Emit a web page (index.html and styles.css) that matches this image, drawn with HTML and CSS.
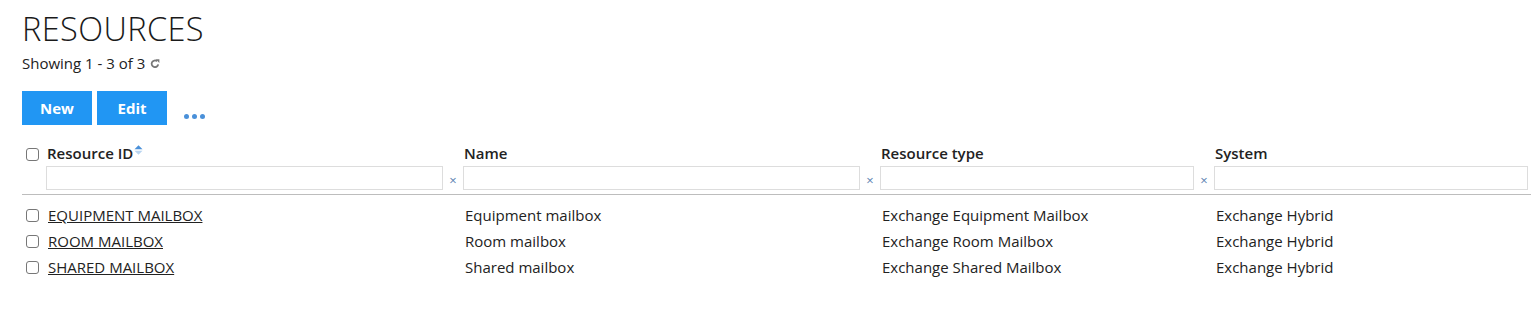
FILE: index.html
```html
<!DOCTYPE html>
<html>
<head>
<meta charset="utf-8">
<link rel="stylesheet" href="styles.css">
</head>
<body>
<div class="page">
  <h1 class="title">RESOURCES</h1>
  <div class="count">Showing 1 - 3 of 3 <svg class="refresh" width="10" height="11" viewBox="0 0 10 11"><path d="M8.2 6.3A3.3 3.3 0 1 1 7 3.2" fill="none" stroke="#777" stroke-width="1.8"/><path d="M5.6 1.2L9.4 1.2L9.4 5z" fill="#777"/></svg></div>
  <div class="toolbar">
    <button class="btn">New</button>
    <button class="btn">Edit</button>
    <span class="more"><i></i><i></i><i></i></span>
  </div>
  <div class="table">
    <div class="head">
      <div class="cell chk"><span class="box"></span></div>
      <div class="cell hcol">
        <div class="hlabel">Resource ID<svg class="sort" width="9" height="10" viewBox="0 0 9 10"><path d="M0.5 4.2L4.5 0.3L8.5 4.2z" fill="#4a90d9"/><path d="M0.5 5.8L4.5 9.7L8.5 5.8z" fill="#b8d4f0"/></svg></div>
        <div class="filter"><span class="input"></span><span class="clear">×</span></div>
      </div>
      <div class="cell hcol">
        <div class="hlabel">Name</div>
        <div class="filter"><span class="input"></span><span class="clear">×</span></div>
      </div>
      <div class="cell hcol">
        <div class="hlabel">Resource type</div>
        <div class="filter"><span class="input"></span><span class="clear">×</span></div>
      </div>
      <div class="cell hcol">
        <div class="hlabel">System</div>
        <div class="filter"><span class="input last"></span></div>
      </div>
    </div>
    <div class="rows">
      <div class="row">
        <div class="cell chk"><span class="box"></span></div>
        <div class="cell"><a href="#">EQUIPMENT MAILBOX</a></div>
        <div class="cell">Equipment mailbox</div>
        <div class="cell">Exchange Equipment Mailbox</div>
        <div class="cell">Exchange Hybrid</div>
      </div>
      <div class="row">
        <div class="cell chk"><span class="box"></span></div>
        <div class="cell"><a href="#">ROOM MAILBOX</a></div>
        <div class="cell">Room mailbox</div>
        <div class="cell">Exchange Room Mailbox</div>
        <div class="cell">Exchange Hybrid</div>
      </div>
      <div class="row">
        <div class="cell chk"><span class="box"></span></div>
        <div class="cell"><a href="#">SHARED MAILBOX</a></div>
        <div class="cell">Shared mailbox</div>
        <div class="cell">Exchange Shared Mailbox</div>
        <div class="cell">Exchange Hybrid</div>
      </div>
    </div>
  </div>
</div>
</body>
</html>
```
FILE: styles.css
```css
html, body {
  margin: 0;
  padding: 0;
  background: #fff;
}
body {
  font-family: "Open Sans", "Liberation Sans", sans-serif;
  font-size: 15px;
  color: #222;
  overflow: hidden;
}
.page {
  padding: 10px 0 0 22px;
}
.title {
  margin: 0;
  font-family: "Open Sans", sans-serif;
  font-weight: 300;
  font-size: 32.5px;
  line-height: 37px;
  letter-spacing: 0.4px;
  color: #1a1a1a;
}
.count {
  margin-top: 6px;
  line-height: 20px;
  display: flex;
  align-items: center;
  gap: 5px;
}
.refresh {
  margin-top: 1px;
}
.toolbar {
  margin-top: 18px;
  display: flex;
  align-items: center;
  gap: 5px;
}
.btn {
  width: 70px;
  height: 34px;
  border: 0;
  background: #2196f3;
  color: #fff;
  font-family: "Open Sans", sans-serif;
  font-weight: 700;
  font-size: 15px;
  padding: 0;
}
.more {
  display: flex;
  gap: 3px;
  margin-left: 12px;
  margin-top: 17px;
}
.more i {
  width: 5px;
  height: 5px;
  border-radius: 50%;
  background: #4a90d9;
}
.table {
  margin-top: 18px;
}
.head, .row {
  display: grid;
  grid-template-columns: 24px 417px 417px 334px 1fr;
}
.head {
  border-bottom: 1px solid #bdbdbd;
  padding-bottom: 4px;
}
.hlabel {
  font-weight: 600;
  line-height: 20px;
  padding-left: 1px;
  display: flex;
  align-items: flex-start;
}
.sort {
  margin-top: 2px;
  margin-left: 1px;
}
.filter {
  display: flex;
  align-items: center;
  margin-top: 3px;
}
.input {
  flex: 1;
  height: 22px;
  border: 1px solid #ddd;
  background: #fff;
}
.input.last {
  margin-right: 3px;
}
.clear {
  width: 20px;
  text-align: center;
  color: #5b84b1;
  font-size: 13px;
  line-height: 14px;
  padding-top: 4px;
}
.chk {
  display: flex;
  align-items: flex-start;
  padding-left: 4px;
}
.head .chk .box {
  margin-top: 5px;
}
.box {
  display: block;
  width: 11px;
  height: 11px;
  border: 1px solid #777;
  border-radius: 3px;
  background: #fff;
}
.rows {
  padding-top: 7px;
}
.row {
  height: 26px;
  align-items: center;
}
.row .chk {
  align-items: center;
}
.row .cell {
  padding-left: 2px;
}
.row .chk {
  padding-left: 4px;
}
.row a {
  color: #222;
  text-decoration: underline;
}
```
